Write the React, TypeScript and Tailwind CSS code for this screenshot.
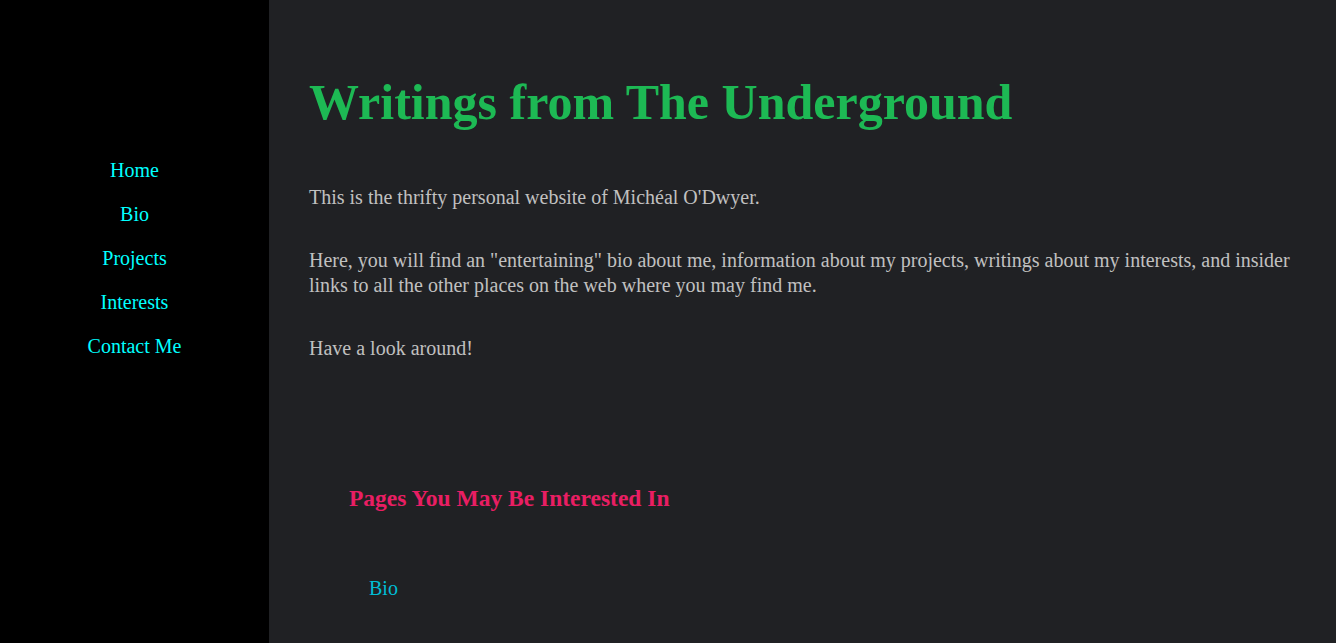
const navItems = ['Home', 'Bio', 'Projects', 'Interests', 'Contact Me'];

export default function App() {
  return (
    <div className="flex h-[643px] w-full bg-[#202124] font-['Liberation_Serif',serif]">
      <aside className="w-[269px] shrink-0 bg-black pt-[148px]">
        <nav className="flex flex-col items-center">
          {navItems.map((item) => (
            <a key={item} href="#" className="text-[20px] leading-[44px] text-[#00ffff]">
              {item}
            </a>
          ))}
        </nav>
      </aside>

      <main className="flex-1 pl-10 pr-10 pt-[74px] text-[#c0c0c0]">
        <h1 className="text-[50px] font-bold leading-[56px] text-[#1db954]">
          Writings from The Underground
        </h1>

        <div className="mt-[55px] flex flex-col gap-[38px] text-[20px] leading-[25px]">
          <p>This is the thrifty personal website of Michéal O'Dwyer.</p>
          <p>
            Here, you will find an "entertaining" bio about me, information about my projects, writings about my
            interests, and insider links to all the other places on the web where you may find me.
          </p>
          <p>Have a look around!</p>
        </div>

        <section className="mt-[123px] pl-10">
          <h2 className="text-[23.5px] font-bold leading-[28px] text-[#e91e63]">Pages You May Be Interested In</h2>
          <ul className="mt-[64px] pl-5">
            <li>
              <a href="#" className="text-[20px] leading-[25px] text-[#00bcd4]">
                Bio
              </a>
            </li>
          </ul>
        </section>
      </main>
    </div>
  );
}
